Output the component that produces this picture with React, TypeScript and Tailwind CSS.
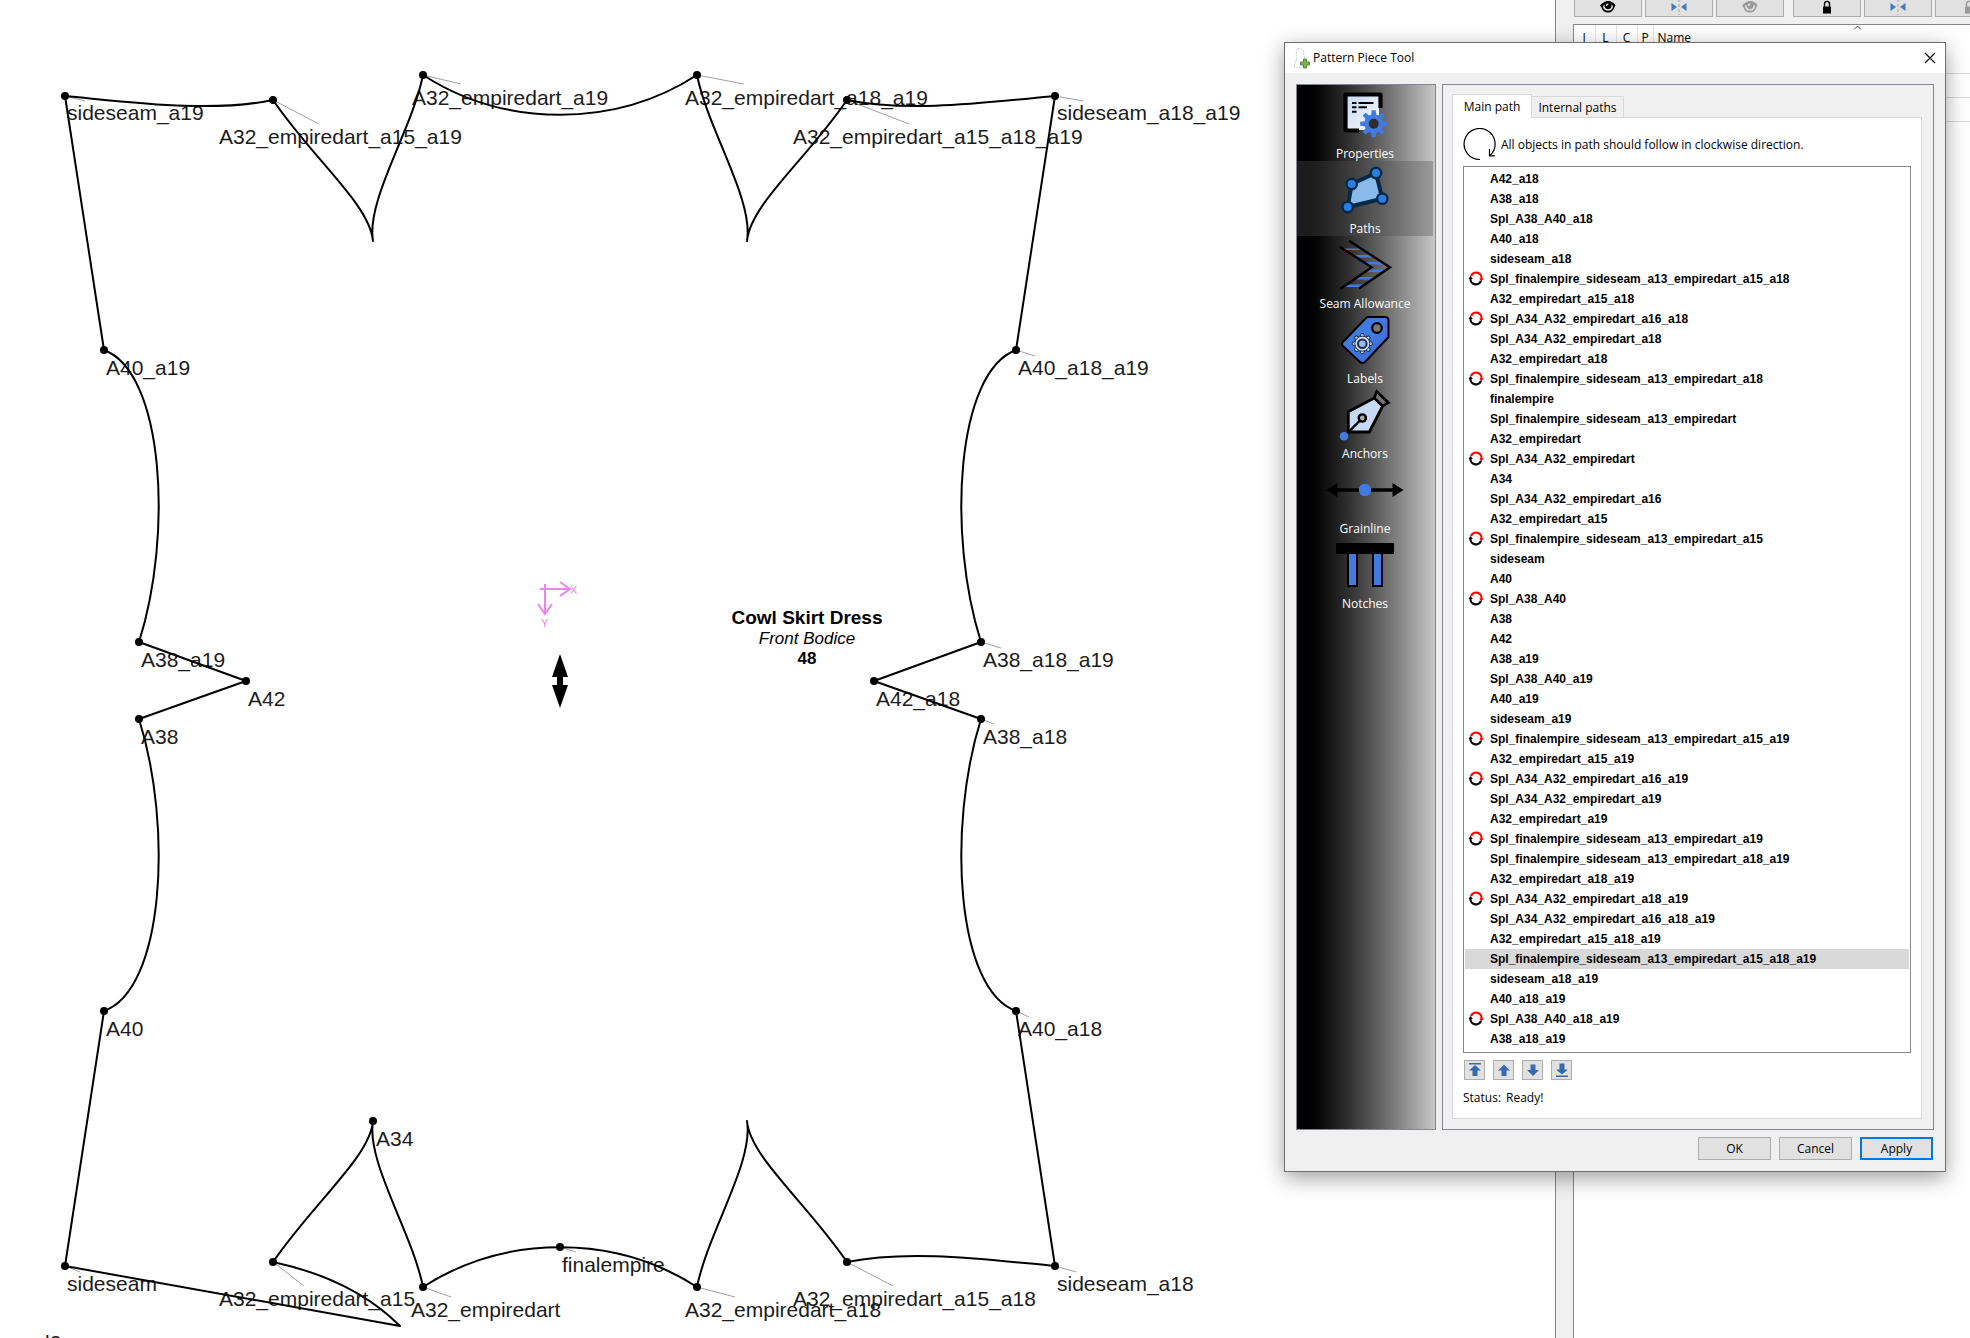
import React from "react";

type Node = { x: number; y: number; name: string; tx?: number; ty?: number; lx?: number; ly?: number };

const NODES: Node[] = [
  { x: 65, y: 96, name: "sideseam_a19", ty: 120, lx: 85, ly: 101 },
  { x: 273, y: 100, name: "A32_empiredart_a15_a19", tx: 219, ty: 144, lx: 319, ly: 124 },
  { x: 423, y: 75, name: "A32_empiredart_a19", tx: 412, ty: 105, lx: 461, ly: 84 },
  { x: 697, y: 75, name: "A32_empiredart_a18_a19", tx: 685, ty: 105, lx: 744, ly: 84 },
  { x: 847, y: 100, name: "A32_empiredart_a15_a18_a19", tx: 793, ty: 144, lx: 909, ly: 124 },
  { x: 1055, y: 96, name: "sideseam_a18_a19", ty: 120, lx: 1083, ly: 101 },
  { x: 104, y: 350, name: "A40_a19" },
  { x: 1016, y: 350, name: "A40_a18_a19", lx: 1035, ly: 356 },
  { x: 139, y: 642, name: "A38_a19" },
  { x: 246, y: 681, name: "A42" },
  { x: 139, y: 719, name: "A38" },
  { x: 981, y: 642, name: "A38_a18_a19", lx: 1001, ly: 648 },
  { x: 874, y: 681, name: "A42_a18" },
  { x: 981, y: 719, name: "A38_a18", lx: 994, ly: 724 },
  { x: 104, y: 1011, name: "A40" },
  { x: 1016, y: 1011, name: "A40_a18", lx: 1029, ly: 1017 },
  { x: 373, y: 1121, name: "A34", tx: 376, ty: 1146 },
  { x: 65, y: 1266, name: "sideseam", lx: 80, ly: 1272 },
  { x: 273, y: 1262, name: "A32_empiredart_a15", tx: 219, ty: 1306, lx: 304, ly: 1286 },
  { x: 423, y: 1287, name: "A32_empiredart", tx: 411, ty: 1317, lx: 451, ly: 1297 },
  { x: 560, y: 1247, name: "finalempire", lx: 576, ly: 1252 },
  { x: 697, y: 1287, name: "A32_empiredart_a18", tx: 685, ty: 1317, lx: 735, ly: 1297 },
  { x: 847, y: 1262, name: "A32_empiredart_a15_a18", tx: 793, ty: 1306, lx: 893, ly: 1286 },
  { x: 1055, y: 1266, name: "sideseam_a18", lx: 1076, ly: 1272 },
];

const OUTLINE = [
  "M104 350 L65 96 C130 102 210 113 273 100 C314 160 370 205 373 241 C366 200 412 130 423 75",
  "C505 128 615 128 697 75",
  "C708 130 754 200 747 241 C750 205 806 160 847 100 C910 113 990 102 1055 96 L1016 350",
  "C956 372 947 535 981 642 L874 681 L981 719",
  "C947 827 956 990 1016 1011 L1055 1266",
  "C990 1260 910 1249 847 1262 C806 1202 750 1157 747 1121 C754 1162 708 1232 697 1287",
  "C615 1234 505 1234 423 1287",
  "C412 1232 366 1162 373 1121 C370 1157 314 1202 273 1262",
  "C320 1272 366 1292 400 1326 L65 1266 L104 1011",
  "C164 990 173 827 139 719 L246 681 L139 642",
  "C173 535 164 372 104 350",
].join(" ");

const PATHS: [string, boolean?][] = [
  ["A42_a18"],
  ["A38_a18"],
  ["Spl_A38_A40_a18"],
  ["A40_a18"],
  ["sideseam_a18"],
  ["Spl_finalempire_sideseam_a13_empiredart_a15_a18", true],
  ["A32_empiredart_a15_a18"],
  ["Spl_A34_A32_empiredart_a16_a18", true],
  ["Spl_A34_A32_empiredart_a18"],
  ["A32_empiredart_a18"],
  ["Spl_finalempire_sideseam_a13_empiredart_a18", true],
  ["finalempire"],
  ["Spl_finalempire_sideseam_a13_empiredart"],
  ["A32_empiredart"],
  ["Spl_A34_A32_empiredart", true],
  ["A34"],
  ["Spl_A34_A32_empiredart_a16"],
  ["A32_empiredart_a15"],
  ["Spl_finalempire_sideseam_a13_empiredart_a15", true],
  ["sideseam"],
  ["A40"],
  ["Spl_A38_A40", true],
  ["A38"],
  ["A42"],
  ["A38_a19"],
  ["Spl_A38_A40_a19"],
  ["A40_a19"],
  ["sideseam_a19"],
  ["Spl_finalempire_sideseam_a13_empiredart_a15_a19", true],
  ["A32_empiredart_a15_a19"],
  ["Spl_A34_A32_empiredart_a16_a19", true],
  ["Spl_A34_A32_empiredart_a19"],
  ["A32_empiredart_a19"],
  ["Spl_finalempire_sideseam_a13_empiredart_a19", true],
  ["Spl_finalempire_sideseam_a13_empiredart_a18_a19"],
  ["A32_empiredart_a18_a19"],
  ["Spl_A34_A32_empiredart_a18_a19", true],
  ["Spl_A34_A32_empiredart_a16_a18_a19"],
  ["A32_empiredart_a15_a18_a19"],
  ["Spl_finalempire_sideseam_a13_empiredart_a15_a18_a19"],
  ["sideseam_a18_a19"],
  ["A40_a18_a19"],
  ["Spl_A38_A40_a18_a19", true],
  ["A38_a18_a19"],
];
const SELECTED = 39;

function PatternCanvas() {
  return (
    <svg width="1240" height="1338" className="block shrink-0 font-['Liberation_Sans',sans-serif]">
      {NODES.filter((n) => n.lx).map((n) => (
        <line key={n.name} x1={n.x} y1={n.y} x2={n.lx} y2={n.ly} stroke="#a0a0a0" strokeWidth="1" />
      ))}
      <g fill="#1c1c1c" className="text-[21px]">
        {NODES.map((n) => (
          <text key={n.name} x={n.tx ?? n.x + 2} y={n.ty ?? n.y + 25}>
            {n.name}
          </text>
        ))}
        <text x="45" y="1350">l2</text>
      </g>
      <path d={OUTLINE} fill="none" stroke="#000" strokeWidth="2" strokeLinejoin="round" />
      {NODES.map((n) => (
        <circle key={n.name} cx={n.x} cy={n.y} r="4" />
      ))}
      <g textAnchor="middle">
        <text x="807" y="624" className="text-[19px] font-bold">Cowl Skirt Dress</text>
        <text x="807" y="644" className="text-[17px] italic">Front Bodice</text>
        <text x="807" y="664" className="text-[17px] font-bold">48</text>
      </g>
      <g fill="none" stroke="#ee82ee" strokeWidth="2">
        <path d="M540 589H570M560 582L570 589L560 596M545 584V614M538 604L545 614L552 604" />
      </g>
      <g fill="#ee82ee" className="text-[11px]">
        <text x="570" y="594">X</text>
        <text x="541" y="627">Y</text>
      </g>
      <path d="M560 654L568 677H563V685H568L560 708L552 685H557V677H552Z" />
    </svg>
  );
}

const EyeIcon = () => (
  <svg width="16" height="14" viewBox="0 0 16 14">
    <path
      d="M0 5.500Q4 1 8 1Q13 1 15.500 5.500L14.500 7Q13 12.500 8 12.500Q3 12.500 1.500 7.500ZM3 6.500Q3.500 10.500 8 10.800Q12.500 10.500 13 6.500Q12.500 5 11.500 4.200Q12 9 8 9.200Q4.200 9 4.500 4.600Q3.500 5.200 3 6.500Z"
      fill="currentColor"
      fillRule="evenodd"
    />
    <path d="M6.500 6Q6.500 4.200 8.300 4" fill="none" stroke="#e1e1e1" strokeWidth="1.300" />
  </svg>
);
const FlipIcon = () => (
  <svg width="16" height="16" viewBox="0 0 16 16">
    <path d="M8 0V16" stroke="#b8b8b8" strokeWidth="1.500" strokeDasharray="3 2" />
    <path d="M0.500 4L6 8L0.500 12ZM15.500 4L10 8L15.500 12Z" fill="#3d7dc0" />
  </svg>
);
const LockIcon = () => (
  <svg width="10" height="14" viewBox="0 0 10 14">
    <path d="M2.500 7V4C2.500 0.500 7.500 0.500 7.500 4V7" fill="none" stroke="currentColor" strokeWidth="1.400" />
    <rect x="1" y="6.500" width="8" height="7" rx="0.500" fill="currentColor" />
  </svg>
);

function ToolButton({ label, dim, children }: { label: string; dim?: boolean; children: React.ReactNode }) {
  return (
    <button
      aria-label={label}
      className={`flex h-6 w-[68px] shrink-0 items-center justify-center border border-[#adadad] bg-[#e1e1e1] pt-1 ${dim ? "text-[#9a9a9a]" : "text-black"}`}
    >
      {children}
    </button>
  );
}

function LayersPanel() {
  return (
    <aside className="flex w-[415px] shrink-0 flex-col overflow-hidden border-l border-[#828790] bg-[#f0f0f0] pl-[17px]">
      <div className="-mt-[7px] flex h-[31px] gap-[3px] pl-px">
        <ToolButton label="Show all"><EyeIcon /></ToolButton>
        <ToolButton label="Invert visibility"><FlipIcon /></ToolButton>
        <ToolButton label="Hide all" dim><EyeIcon /></ToolButton>
        <span className="w-[3px] shrink-0" />
        <ToolButton label="Lock all"><LockIcon /></ToolButton>
        <ToolButton label="Invert locks"><FlipIcon /></ToolButton>
        <ToolButton label="Unlock all" dim><LockIcon /></ToolButton>
      </div>
      <div className="relative flex-1 border-t border-l border-[#828790] bg-white">
        <svg width="9" height="5" className="absolute top-0 left-[279px]" fill="none" stroke="#555">
          <path d="M1 4.500L4.500 1L8 4.500" />
        </svg>
        <table className="w-full table-fixed border-collapse text-left text-xs">
          <thead>
            <tr className="h-6">
              <th className="w-[21px] border-r border-[#e5e5e5] pt-[2px] text-center font-normal">I</th>
              <th className="w-[21px] border-r border-[#e5e5e5] pt-[2px] text-center font-normal">L</th>
              <th className="w-[21px] border-r border-[#e5e5e5] pt-[2px] text-center font-normal">C</th>
              <th className="w-[16px] border-r border-[#e5e5e5] pt-[2px] text-center font-normal">P</th>
              <th className="pt-[2px] pl-1 font-normal">Name</th>
            </tr>
          </thead>
          <tbody>
            {[0, 1, 2].map((r) => (
              <tr key={r} className="h-6 border-b border-[#d8d8d8]">
                <td colSpan={5} />
              </tr>
            ))}
          </tbody>
        </table>
      </div>
    </aside>
  );
}

const TEETH = [0, 45, 90, 135, 180, 225, 270, 315];

const ICONS: Record<string, React.ReactNode> = {
  Properties: (
    <>
      <rect x="22" y="8" width="32" height="34" fill="url(#sheet)" />
      <path d="M34 42.500H20.500V6.500H55.500V20" fill="none" stroke="#000" strokeWidth="4.200" strokeLinejoin="round" />
      <path d="M27 15H31.500M33.500 15H48.500M27 19.300H31.500M33.500 19.300H42M27 23.700H31.500" stroke="#000" strokeWidth="2" />
      <g fill="#3f7be0" transform="translate(48.700 35.700)">
        {TEETH.map((a) => (
          <path key={a} d="M-2.800 -7L-2 -13.500H2L2.800 -7Z" transform={`rotate(${a})`} />
        ))}
        <circle r="9.500" />
        <circle r="5" fill="#2d2d2d" />
      </g>
    </>
  ),
  Paths: (
    <>
      <path d="M51 10L57.300 35.700L22.700 44L26.700 21Z" fill="#8bb9ea" stroke="#06294a" strokeWidth="4" />
      {[[51, 10], [26.7, 21], [57.3, 35.7], [22.7, 44]].map(([x, y]) => (
        <circle key={x} cx={x} cy={y} r="5.200" fill="#2a7de1" stroke="#06294a" strokeWidth="2.400" />
      ))}
    </>
  ),
  "Seam Allowance": (
    <>
      <path d="M18 10.500H33L36 12H20ZM28 17H45L48 19.500H32ZM39 24H56L59 26.500H43ZM45 31.500H62L59 34H42ZM34 39H51L48 41.500H30ZM23 46.500H40L37 49H19Z" fill="#3f7be0" />
      <path d="M24.300 3L65 29.300L34 50.500M14.700 8.700L46.700 29.300L15.300 51" fill="none" stroke="#000" strokeWidth="2.400" />
    </>
  ),
  Labels: (
    <>
      <path
        d="M43 4H60Q63.500 4 63.500 7.500V24L40 49Q37.500 51 35 49L18 33Q16 31 18 29L41 5Q42 4 43 4Z"
        fill="url(#tag)"
        stroke="#000"
        strokeWidth="2"
      />
      <circle cx="52" cy="15" r="4.800" fill="#777" stroke="#000" strokeWidth="2.300" />
      <g transform="translate(37.300 30.700)" fill="#cfdcf2" stroke="#1b2c50" strokeWidth="1">
        {TEETH.map((a) => (
          <path key={a} d="M-2.200 -7L-1.300 -10H1.300L2.200 -7" transform={`rotate(${a})`} />
        ))}
        <circle r="7.500" />
        <circle r="4.300" fill="#9db9e8" strokeWidth="2" />
      </g>
    </>
  ),
  Anchors: (
    <>
      <path d="M49.300 10L57.700 18L44.300 44H23.300V23.700Z" fill="#c8daf3" stroke="#000" strokeWidth="2.800" />
      <path d="M51.700 3.500L63.500 14.700L57.700 18L49.300 10Z" fill="#777" stroke="#000" strokeWidth="2.600" />
      <path d="M24 43.500L35 32.500" stroke="#000" strokeWidth="2.400" />
      <circle cx="37.300" cy="30" r="3.600" fill="#aaa" stroke="#000" strokeWidth="2.400" />
      <circle cx="19" cy="48.300" r="4.300" fill="#3f7be0" />
    </>
  ),
  Grainline: (
    <>
      <path d="M10 27H70" stroke="#000" strokeWidth="3.600" />
      <path d="M1.500 27L12.500 20V34ZM78.500 27L67.500 20V34Z" />
      <circle cx="40" cy="27" r="6.200" fill="#3f7be0" />
    </>
  ),
  Notches: (
    <>
      <path d="M11 5H69V16H11ZM22 16H33V49H22ZM47 16H58V49H47Z" />
      <path d="M24 16H31V47H24ZM49 16H56V47H49Z" fill="#3f7be0" />
    </>
  ),
};

const LoopIcon = () => (
  <svg width="16" height="16" viewBox="0 0 16 16" fill="none" strokeWidth="2.200">
    <path d="M2.500 7A5.500 5.500 0 0 0 13 10" stroke="#000" />
    <path d="M3 5A5.500 5.500 0 0 1 13.400 8.500" stroke="#f00" />
    <path d="M0.500 8L2.500 5L4.800 8Z" fill="#000" />
    <path d="M11.200 7.500H15.500L13.400 10.500Z" fill="#f00" />
  </svg>
);

const MOVES: [string, string][] = [
  ["Move to top", "M2 1H14V2.500H2ZM8 3L14 8.500H10.500V14H5.500V8.500H2Z"],
  ["Move up", "M8 2.500L14 8.500H10.500V14H5.500V8.500H2Z"],
  ["Move down", "M8 14L14 8H10.500V2.500H5.500V8H2Z"],
  ["Move to bottom", "M2 13.500H14V15H2ZM8 12.500L14 7.500H10.500V1.500H5.500V7.500H2Z"],
];

function PatternPieceDialog() {
  return (
    <div
      role="dialog"
      aria-labelledby="dialog-title"
      className="absolute top-[42px] right-[24px] w-[662px] border border-[#6e6e6e] bg-[#f0f0f0] shadow-[0_6px_20px_rgba(0,0,0,0.38)]"
    >
      <header className="flex h-[30px] items-center bg-white pr-[9px] pl-2">
        <svg width="18" height="22" viewBox="0 0 18 22" fill="none">
          <path d="M5 2Q8 0 10 3L11 8L12 12M5 2L3 7L4 11L1 19Q5 22 10 20" stroke="#c9c9c9" strokeDasharray="2 1" />
          <path d="M10.500 12H13.500V15H16.500V18H13.500V21H10.500V18H7.500V15H10.500Z" fill="#7fb052" stroke="#5b8a35" />
        </svg>
        <h1 id="dialog-title" className="ml-[2px] flex-1 text-xs">Pattern Piece Tool</h1>
        <button aria-label="Close">
          <svg width="12" height="12" stroke="#000" strokeWidth="1.200">
            <path d="M1 1L11 11M11 1L1 11" />
          </svg>
        </button>
      </header>

      <div className="flex gap-[6px] px-[11px] pt-[11px]">
        <nav className="w-[140px] shrink-0 border border-[#828790] bg-linear-to-r from-black to-[#c8c8c8] pt-px pr-[2px]">
          {Object.keys(ICONS).map((name) => (
            <button
              key={name}
              className={`flex h-[75px] w-full flex-col items-center gap-[2px] pt-[2px] text-xs text-white ${name === "Paths" ? "bg-[#505050]/35" : ""}`}
            >
              <svg width="80" height="56" viewBox="0 0 80 56" className="shrink-0">{ICONS[name]}</svg>
              <span className="leading-4 whitespace-nowrap">{name}</span>
            </button>
          ))}
        </nav>

        <section className="min-w-0 flex-1 border border-[#828790] pt-[9px] pr-[11px] pb-[10px] pl-[9px]">
          <div role="tablist" className="-mb-px flex items-end text-xs">
            <button role="tab" aria-selected="true" className="relative z-10 h-6 w-20 border border-b-0 border-[#d9d9d9] bg-white">
              Main path
            </button>
            <button role="tab" aria-selected="false" className="-ml-px h-[22px] w-[93px] border border-[#d9d9d9] bg-[#f0f0f0] pt-px">
              Internal paths
            </button>
          </div>
          <div role="tabpanel" className="border border-[#d9d9d9] bg-white px-[10px] pt-[9px] pb-[11px]">
            <div className="flex h-[39px] items-center gap-[5px] pb-[3px] text-xs">
              <svg width="33" height="34" viewBox="0 1 33 34" fill="none" stroke="#000" strokeWidth="1.200" className="shrink-0">
                <path d="M17 32.500A15.500 15.500 0 1 1 27 28.500" />
                <path d="M26.500 22V28.800H32" />
              </svg>
              <span className="whitespace-nowrap">All objects in path should follow in clockwise direction.</span>
            </div>
            <ul
              role="listbox"
              aria-label="Main path"
              className="border border-[#828790] px-px pt-[2px] pb-[3px] font-['Liberation_Sans',sans-serif] text-xs font-bold"
            >
              {PATHS.map(([name, loop], i) => (
                <li
                  key={name}
                  role="option"
                  aria-selected={i === SELECTED}
                  className={`flex h-5 items-center ${i === SELECTED ? "bg-[#d9d9d9]" : ""}`}
                >
                  <span className="flex w-[25px] pl-[3px]">{loop && <LoopIcon />}</span>
                  {name}
                </li>
              ))}
            </ul>
            <div className="mt-[7px] flex gap-2 pl-px">
              {MOVES.map(([label, d]) => (
                <button
                  key={label}
                  aria-label={label}
                  className="flex h-5 w-[21px] items-center justify-center border border-[#adadad] bg-[#e1e1e1]"
                >
                  <svg width="16" height="16" viewBox="0 0 16 16" fill="#3769ae">
                    <path d={d} />
                  </svg>
                </button>
              ))}
            </div>
            <p className="mt-[9px] flex h-[18px] items-center gap-[5px] text-xs">
              <span>Status:</span>
              <span>Ready!</span>
            </p>
          </div>
        </section>
      </div>

      <footer className="flex justify-end gap-2 px-3 pt-[7px] pb-[11px] text-xs">
        <button className="h-[23px] w-[73px] border border-[#adadad] bg-[#e1e1e1]">OK</button>
        <button className="h-[23px] w-[73px] border border-[#adadad] bg-[#e1e1e1]">Cancel</button>
        <button className="h-[23px] w-[73px] border-2 border-[#0078d7] bg-[#e1e1e1]">Apply</button>
      </footer>
    </div>
  );
}

export default function App() {
  return (
    <div className="relative flex h-screen overflow-hidden bg-white font-['Open_Sans','Noto_Sans',sans-serif] text-black">
      <svg width="0" height="0" className="absolute">
        <defs>
          <linearGradient id="sheet" x1="0" y1="0" x2="1" y2="1">
            <stop offset="0" stopColor="#c9daf4" />
            <stop offset="1" stopColor="#f7f9fd" />
          </linearGradient>
          <linearGradient id="tag" x1="0" y1="0" x2="1" y2="1">
            <stop offset="0.500" stopColor="#3f7be0" />
            <stop offset="0.800" stopColor="#4068dc" />
          </linearGradient>
        </defs>
      </svg>
      <main className="min-w-0 flex-1 overflow-hidden">
        <PatternCanvas />
      </main>
      <LayersPanel />
      <PatternPieceDialog />
    </div>
  );
}
